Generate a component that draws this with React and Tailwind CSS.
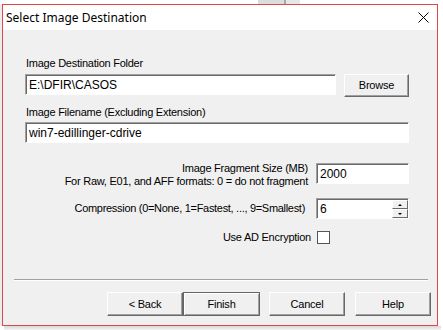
import React from "react";

const sys = { fontFamily: '"Liberation Sans", Arial, sans-serif' };

function Button({ label, isDefault }) {
  return (
    <button
      className={
        "h-[24px] text-[11px] tracking-[-0.2px] text-black bg-[#f0f0f0] " +
        (isDefault
          ? "w-[77px] border border-[#646464] shadow-[inset_1px_1px_0_#ffffff,inset_-1px_-1px_0_#a0a0a0]"
          : "w-[76px] border-t border-l border-t-white border-l-white border-r border-b border-r-[#696969] border-b-[#696969] shadow-[inset_-1px_-1px_0_#a0a0a0]")
      }
      style={sys}
    >
      {label}
    </button>
  );
}

function Field({ value, className }) {
  return (
    <div
      className={
        "h-[21px] bg-white border-t border-l border-t-[#a0a0a0] border-l-[#a0a0a0] border-r border-b border-r-white border-b-white shadow-[inset_1px_1px_0_#696969] flex items-center pl-[3px] text-[12px] text-black " +
        (className || "")
      }
      style={sys}
    >
      {value}
    </div>
  );
}

export default function App() {
  return (
    <div className="w-[443px] h-[330px] bg-white overflow-hidden" style={sys}>
      {/* top strip showing the window behind */}
      <div className="h-[4px] flex">
        <div className="w-[258px]" />
        <div className="w-[26px] bg-[#dcdcdc]" />
        <div className="w-[2px] bg-[#a8a8a8]" />
        <div className="w-[14px] bg-[#e6e6e6]" />
      </div>
      <div className="flex">
        <div className="w-[2px] bg-[#ececec]" />
        <div className="w-[436px] h-[322px] border border-[#e04848] flex flex-col">
          {/* title bar */}
          <div className="h-[25px] bg-white flex items-center justify-between pl-[3px] pr-[8px]">
            <span className="text-[12px] text-black" style={{ fontFamily: '"Noto Sans", sans-serif' }}>
              Select Image Destination
            </span>
            <svg width="11" height="11" viewBox="0 0 11 11">
              <path d="M0.5 0.5 L10.5 10.5 M10.5 0.5 L0.5 10.5" stroke="#000" strokeWidth="1" />
            </svg>
          </div>
          {/* body */}
          <div className="flex-1 bg-[#f0f0f0] flex flex-col">
            <div className="pl-[22px] pr-[28px] pt-[27px] flex flex-col">
              <div className="text-[11px] leading-[13px] tracking-[-0.25px] text-black pl-[1px]">
                Image Destination Folder
              </div>
              <div className="flex mt-[4px] items-start">
                <Field value="E:\DFIR\CASOS" className="w-[311px]" />
                <button
                  className="ml-[8px] w-[65px] h-[23px] bg-[#f0f0f0] text-[11px] tracking-[-0.2px] text-black border-t border-l border-t-white border-l-white border-r border-b border-r-[#696969] border-b-[#696969] shadow-[inset_-1px_-1px_0_#a0a0a0]"
                  style={sys}
                >
                  Browse
                </button>
              </div>
              <div className="mt-[9px] text-[11px] leading-[13px] tracking-[-0.25px] text-black pl-[1px]">
                Image Filename (Excluding Extension)
              </div>
              <Field value="win7-edillinger-cdrive" className="w-[384px] mt-[3px]" />

              <div className="flex justify-end items-start mt-[20px]">
                <div className="text-right text-[11px] leading-[13px] tracking-[-0.25px] text-black mt-[-1px]">
                  Image Fragment Size (MB)
                  <br />
                  For Raw, E01, and AFF formats: 0 = do not fragment
                </div>
                <Field value="2000" className="w-[93px] ml-[8px]" />
              </div>

              <div className="flex justify-end items-center mt-[10px]">
                <div className="text-[11px] leading-[13px] tracking-[-0.3px] text-black mr-[11px]">
                  Compression (0=None, 1=Fastest, ..., 9=Smallest)
                </div>
                <div className="w-[93px] h-[21px] bg-white border-t border-l border-t-[#a0a0a0] border-l-[#a0a0a0] border-r border-b border-r-white border-b-white shadow-[inset_1px_1px_0_#696969] flex">
                  <div className="flex-1 pl-[3px] text-[12px] flex items-center text-black">6</div>
                  <div className="w-[16px] flex flex-col mt-[1px]">
                    <div className="h-[9px] bg-[#f0f0f0] border-r border-b border-r-[#696969] border-b-[#696969] border-t border-l border-t-white border-l-white flex items-center justify-center">
                      <div className="w-0 h-0 border-l-[2px] border-r-[2px] border-b-[2px] border-l-transparent border-r-transparent border-b-black" />
                    </div>
                    <div className="h-[9px] bg-[#f0f0f0] border-r border-b border-r-[#696969] border-b-[#696969] border-t border-l border-t-white border-l-white flex items-center justify-center">
                      <div className="w-0 h-0 border-l-[2px] border-r-[2px] border-t-[2px] border-l-transparent border-r-transparent border-t-black" />
                    </div>
                  </div>
                </div>
              </div>

              <div className="flex justify-end items-center mt-[12px] pr-[79px]">
                <div className="text-[11px] leading-[13px] tracking-[-0.25px] text-black mr-[6px]">
                  Use AD Encryption
                </div>
                <div className="w-[13px] h-[13px] bg-white border border-[#555]" />
              </div>
            </div>

            {/* separator */}
            <div className="mt-[35px] ml-[11px] w-[414px] h-[2px] border-t border-t-[#a0a0a0] border-b border-b-white" />

            {/* buttons */}
            <div className="flex mt-[11px] pl-[104px]">
              <Button label="< Back" />
              <Button label="Finish" isDefault />
              <div className="w-[9px]" />
              <Button label="Cancel" />
              <div className="w-[10px]" />
              <Button label="Help" />
            </div>
          </div>
        </div>
        <div className="w-[5px] bg-white" />
      </div>
      <div className="h-[4px] bg-gradient-to-b from-[#d8d8d8] to-[#f4f4f4] ml-[4px] w-[437px]" />
    </div>
  );
}
